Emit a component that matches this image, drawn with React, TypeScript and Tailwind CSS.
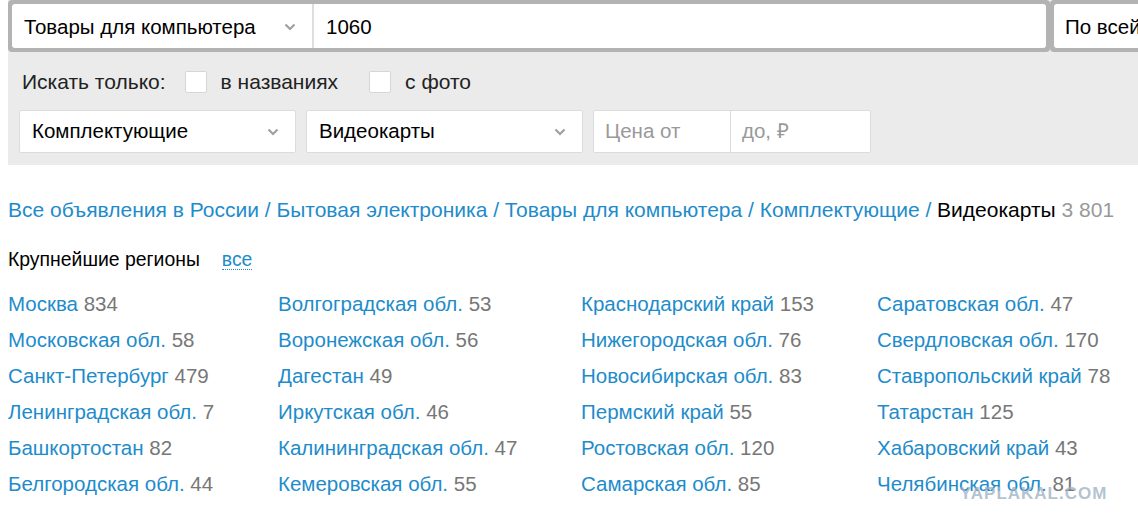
import React from "react";

const regions: [string, number][][] = [
  [
    ["Москва", 834],
    ["Московская обл.", 58],
    ["Санкт-Петербург", 479],
    ["Ленинградская обл.", 7],
    ["Башкортостан", 82],
    ["Белгородская обл.", 44],
  ],
  [
    ["Волгоградская обл.", 53],
    ["Воронежская обл.", 56],
    ["Дагестан", 49],
    ["Иркутская обл.", 46],
    ["Калининградская обл.", 47],
    ["Кемеровская обл.", 55],
  ],
  [
    ["Краснодарский край", 153],
    ["Нижегородская обл.", 76],
    ["Новосибирская обл.", 83],
    ["Пермский край", 55],
    ["Ростовская обл.", 120],
    ["Самарская обл.", 85],
  ],
  [
    ["Саратовская обл.", 47],
    ["Свердловская обл.", 170],
    ["Ставропольский край", 78],
    ["Татарстан", 125],
    ["Хабаровский край", 43],
    ["Челябинская обл.", 81],
  ],
];

const colWidths = ["w-[270px]", "w-[303px]", "w-[296px]", "flex-1"];

const Chevron = () => (
  <svg width="12" height="8" viewBox="0 0 12 8" className="shrink-0">
    <path d="M1.5 1.5 L6 6 L10.5 1.5" fill="none" stroke="#a0a0a0" strokeWidth="2.2" />
  </svg>
);

const Select = ({ label }: { label: string }) => (
  <div className="flex h-[43px] w-[277px] items-center justify-between rounded-[2px] border border-[#dcdcdc] bg-white pl-[12px] pr-[16px] text-[20.5px] text-black">
    <span>{label}</span>
    <Chevron />
  </div>
);

const Checkbox = () => (
  <span className="block h-[22px] w-[22px] rounded-[2px] border border-[#d6d6d6] bg-white" />
);

export default function App() {
  return (
    <div className="relative h-[522px] w-[1138px] overflow-hidden bg-white font-['Liberation_Sans',Arial,sans-serif]">
      {/* search filters */}
      <div className="ml-[8px] h-[165px] bg-[#ebebeb]">
        <div className="flex h-[52px]">
          <div className="flex w-[1042px] shrink-0 rounded-[4px] bg-[#b3b3b3] p-[4px]">
            <div className="flex w-[300px] items-center justify-between rounded-l-[3px] bg-white pb-[1px] pl-[12px] pr-[16px] pt-[3px] text-[20.5px] text-black">
              <span>Товары для компьютера</span>
              <Chevron />
            </div>
            <div className="w-[2px] bg-[#dedede]" />
            <div className="flex flex-1 items-center rounded-r-[3px] bg-white pl-[12px] pt-[3px] text-[20.5px] text-black">
              1060
            </div>
          </div>
          <div className="flex min-w-0 flex-1 rounded-l-[4px] bg-[#b3b3b3] py-[4px] pl-[4px]">
            <div className="flex flex-1 items-center overflow-hidden whitespace-nowrap rounded-l-[3px] bg-white pl-[11px] pt-[3px] text-[20.5px] text-black">
              По всей
            </div>
          </div>
        </div>
        <div className="flex h-[58px] items-center pl-[14px] pt-[2px] text-[21px] text-[#222]">
          <span>Искать только:</span>
          <span className="ml-[19px]"><Checkbox /></span>
          <span className="ml-[14px]">в названиях</span>
          <span className="ml-[31px]"><Checkbox /></span>
          <span className="ml-[14px]">с фото</span>
        </div>
        <div className="flex items-center gap-[10px] pl-[11px]">
          <Select label="Комплектующие" />
          <Select label="Видеокарты" />
          <div className="flex h-[43px] rounded-[2px] border border-[#dcdcdc] bg-white text-[20.5px] text-[#999]">
            <div className="flex w-[137px] items-center border-r border-[#dcdcdc] pl-[11px]">Цена от</div>
            <div className="flex w-[139px] items-center pl-[11px]">до, ₽</div>
          </div>
        </div>
      </div>

      {/* breadcrumbs */}
      <div className="mt-[33px] whitespace-nowrap pl-[8px] text-[21px] leading-[24px] text-[#1e8ccb]">
        Все объявления в России / Бытовая электроника / Товары для компьютера / Комплектующие /{" "}
        <span className="text-black">Видеокарты</span> <span className="text-[#999]">3 801</span>
      </div>

      <div className="mt-[25px] flex items-center pl-[8px] text-[19.4px] leading-[24px] text-black">
        <span>Крупнейшие регионы</span>
        <span className="ml-[22px] border-b border-dotted border-[#1e8ccb] leading-[20px] text-[#1e8ccb]">все</span>
      </div>

      {/* region list */}
      <div className="mt-[15px] flex pl-[8px] text-[20.5px] leading-[36px]">
        {regions.map((col, i) => (
          <div key={i} className={`flex flex-col ${colWidths[i]}`}>
            {col.map(([name, count]) => (
              <div key={name} className="whitespace-nowrap">
                <span className="text-[#1e8ccb]">{name}</span>{" "}
                <span className="text-[#777]">{count}</span>
              </div>
            ))}
          </div>
        ))}
      </div>

      <div className="absolute left-[960px] top-[481px] text-[17px] font-bold tracking-[1px] text-[#9fb3c3]/80">
        YAPLAKAL.COM
      </div>
    </div>
  );
}
